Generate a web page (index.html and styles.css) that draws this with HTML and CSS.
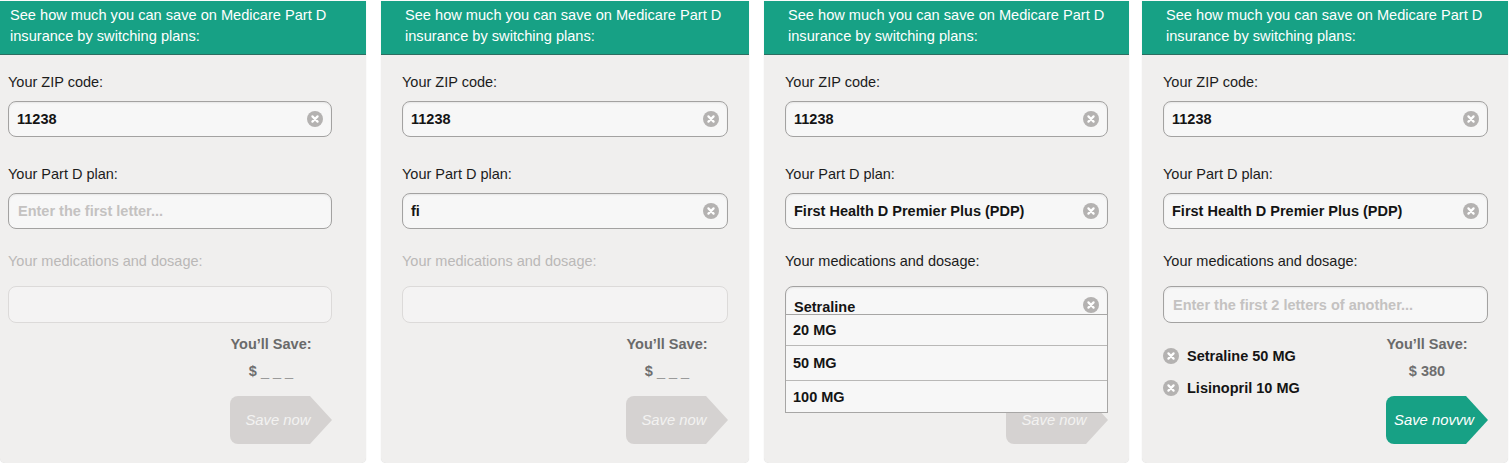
FILE: index.html
```html
<!DOCTYPE html>
<html lang="en">
<head>
<meta charset="utf-8">
<title>Medicare Part D savings</title>
<link rel="stylesheet" href="styles.css">
</head>
<body>
<div class="board">

  <section class="panel p1">
    <header class="panel-head">See how much you can save on Medicare Part D<br>insurance by switching plans:</header>
    <div class="panel-body">
      <div class="field-label">Your ZIP code:</div>
      <div class="input"><span class="value">11238</span><svg class="clear" viewBox="0 0 16 16"><circle cx="8" cy="8" r="8"/><path d="M5.4 5.4l5.2 5.2M10.6 5.4l-5.2 5.2"/></svg></div>
      <div class="field-label gap-plan">Your Part D plan:</div>
      <div class="input"><span class="placeholder">Enter the first letter...</span></div>
      <div class="field-label gap-meds disabled">Your medications and dosage:</div>
      <div class="input meds disabled"></div>
      <div class="result-row">
        <div class="chips"></div>
        <div class="savings">
          <div class="save-label">You’ll Save:</div>
          <div class="save-amount">$ <span class="blank">_ _ _</span></div>
          <button class="save-btn" type="button">Save now</button>
        </div>
      </div>
    </div>
  </section>

  <section class="panel p2">
    <header class="panel-head">See how much you can save on Medicare Part D<br>insurance by switching plans:</header>
    <div class="panel-body">
      <div class="field-label">Your ZIP code:</div>
      <div class="input"><span class="value">11238</span><svg class="clear" viewBox="0 0 16 16"><circle cx="8" cy="8" r="8"/><path d="M5.4 5.4l5.2 5.2M10.6 5.4l-5.2 5.2"/></svg></div>
      <div class="field-label gap-plan">Your Part D plan:</div>
      <div class="input"><span class="value">fi</span><svg class="clear" viewBox="0 0 16 16"><circle cx="8" cy="8" r="8"/><path d="M5.4 5.4l5.2 5.2M10.6 5.4l-5.2 5.2"/></svg></div>
      <div class="field-label gap-meds disabled">Your medications and dosage:</div>
      <div class="input meds disabled"></div>
      <div class="result-row">
        <div class="chips"></div>
        <div class="savings">
          <div class="save-label">You’ll Save:</div>
          <div class="save-amount">$ <span class="blank">_ _ _</span></div>
          <button class="save-btn" type="button">Save now</button>
        </div>
      </div>
    </div>
  </section>

  <section class="panel p3">
    <header class="panel-head">See how much you can save on Medicare Part D<br>insurance by switching plans:</header>
    <div class="panel-body">
      <div class="field-label">Your ZIP code:</div>
      <div class="input"><span class="value">11238</span><svg class="clear" viewBox="0 0 16 16"><circle cx="8" cy="8" r="8"/><path d="M5.4 5.4l5.2 5.2M10.6 5.4l-5.2 5.2"/></svg></div>
      <div class="field-label gap-plan">Your Part D plan:</div>
      <div class="input"><span class="value">First Health D Premier Plus (PDP)</span><svg class="clear" viewBox="0 0 16 16"><circle cx="8" cy="8" r="8"/><path d="M5.4 5.4l5.2 5.2M10.6 5.4l-5.2 5.2"/></svg></div>
      <div class="field-label gap-meds">Your medications and dosage:</div>
      <div class="input meds open"><span class="value low">Setraline</span><svg class="clear" viewBox="0 0 16 16"><circle cx="8" cy="8" r="8"/><path d="M5.4 5.4l5.2 5.2M10.6 5.4l-5.2 5.2"/></svg>
        <ul class="dropdown">
          <li class="opt opt1">20 MG</li>
          <li class="opt opt2">50 MG</li>
          <li class="opt opt3">100 MG</li>
        </ul>
      </div>
      <div class="result-row">
        <div class="chips"></div>
        <div class="savings">
          <div class="save-label">You’ll Save:</div>
          <div class="save-amount">$ <span class="blank">_ _ _</span></div>
          <button class="save-btn" type="button">Save now</button>
        </div>
      </div>
    </div>
  </section>

  <section class="panel p4">
    <header class="panel-head">See how much you can save on Medicare Part D<br>insurance by switching plans:</header>
    <div class="panel-body">
      <div class="field-label">Your ZIP code:</div>
      <div class="input"><span class="value">11238</span><svg class="clear" viewBox="0 0 16 16"><circle cx="8" cy="8" r="8"/><path d="M5.4 5.4l5.2 5.2M10.6 5.4l-5.2 5.2"/></svg></div>
      <div class="field-label gap-plan">Your Part D plan:</div>
      <div class="input"><span class="value">First Health D Premier Plus (PDP)</span><svg class="clear" viewBox="0 0 16 16"><circle cx="8" cy="8" r="8"/><path d="M5.4 5.4l5.2 5.2M10.6 5.4l-5.2 5.2"/></svg></div>
      <div class="field-label gap-meds">Your medications and dosage:</div>
      <div class="input meds"><span class="placeholder">Enter the first 2 letters of another...</span></div>
      <div class="result-row">
        <div class="chips">
          <div class="chip"><svg class="clear" viewBox="0 0 16 16"><circle cx="8" cy="8" r="8"/><path d="M5.4 5.4l5.2 5.2M10.6 5.4l-5.2 5.2"/></svg><span>Setraline 50 MG</span></div>
          <div class="chip"><svg class="clear" viewBox="0 0 16 16"><circle cx="8" cy="8" r="8"/><path d="M5.4 5.4l5.2 5.2M10.6 5.4l-5.2 5.2"/></svg><span>Lisinopril 10 MG</span></div>
        </div>
        <div class="savings">
          <div class="save-label">You’ll Save:</div>
          <div class="save-amount">$ 380</div>
          <button class="save-btn active" type="button">Save novvw</button>
        </div>
      </div>
    </div>
  </section>

</div>
</body>
</html>
```

FILE: styles.css
```css
* { box-sizing: border-box; }

body {
  margin: 0;
  background: #ffffff;
  font-family: "Liberation Sans", Arial, Helvetica, sans-serif;
  font-size: 14.5px;
  color: #1c1c1c;
}

.board {
  display: flex;
  align-items: flex-start;
  padding-top: 1px;
}

.panel {
  position: relative;
  height: 462px;
  background: #f0efee;
  border-radius: 0 0 5px 5px;
  box-shadow: 0 0 1px rgba(0, 0, 0, 0.18);
}

.p1 { width: 366px; }
.p2 { width: 368px; margin-left: 15px; }
.p3 { width: 365px; margin-left: 15px; }
.p4 { width: 366px; margin-left: 13px; }

.panel-head {
  background: #17a185;
  color: #ffffff;
  font-size: 14.6px;
  line-height: 21px;
  padding: 4px 8px 7px 24px;
  border-bottom: 1px solid #2c6e61;
  white-space: nowrap;
}
.p1 .panel-head { padding-left: 10px; }

.panel-body {
  padding: 18px 21px 0 21px;
}
.p1 .panel-body { padding-left: 8px; padding-right: 34px; }
.p4 .panel-body { padding-right: 20px; }

.field-label {
  line-height: 18px;
  color: #1c1c1c;
}
.field-label.disabled { color: #bab8b7; }
.gap-plan { margin-top: 28px; }
.gap-meds { margin-top: 23px; }

.input {
  position: relative;
  margin-top: 10px;
  height: 36px;
  display: flex;
  align-items: center;
  padding: 0 8px 0 8px;
  background: #f7f7f7;
  border: 1px solid #a3a2a1;
  border-radius: 8px;
  box-shadow: inset 0 1px 2px rgba(0, 0, 0, 0.07);
}
.input.meds { margin-top: 16px; height: 37px; }
.input.disabled {
  border-color: #dcdad9;
  background: #f4f3f3;
  box-shadow: none;
}

.value {
  flex: 1;
  font-weight: bold;
  color: #141414;
  white-space: nowrap;
}
.value.low { padding-top: 4px; }

.placeholder {
  flex: 1;
  padding-left: 1px;
  font-weight: bold;
  color: #c4c2c1;
  white-space: nowrap;
}

.clear {
  width: 16px;
  height: 16px;
  flex: none;
}
.clear circle { fill: #b4b2b1; }
.clear path {
  stroke: #ffffff;
  stroke-width: 2.2;
  stroke-linecap: round;
  fill: none;
}

.dropdown {
  position: absolute;
  z-index: 2;
  top: 27px;
  left: -1px;
  right: -1px;
  margin: 0;
  padding: 0;
  list-style: none;
  background: #f7f7f7;
  border: 1px solid #a7a6a5;
}
.opt {
  display: flex;
  align-items: center;
  padding-left: 7px;
  font-weight: bold;
  color: #141414;
}
.opt + .opt { border-top: 1px solid #b9b8b7; }
.opt1 { height: 30px; }
.opt2 { height: 35px; }
.opt3 { height: 32px; }

.result-row {
  display: flex;
  justify-content: space-between;
  align-items: flex-start;
  margin-top: 12px;
}

.chips {
  padding-top: 12px;
  display: flex;
  flex-direction: column;
  gap: 14px;
}
.chip {
  display: flex;
  align-items: center;
  gap: 8px;
  height: 18px;
  font-weight: bold;
  color: #141414;
}

.savings {
  width: 102px;
  display: flex;
  flex-direction: column;
  align-items: stretch;
}
.save-label,
.save-amount {
  padding-right: 20px;
  text-align: center;
  line-height: 18px;
  font-weight: bold;
  color: #6a6a6a;
  white-space: nowrap;
}
.save-amount { margin-top: 9px; color: #6e6e6e; }
.blank { font-weight: normal; color: #9a9a9a; }

.save-btn {
  margin-top: 16px;
  width: 102px;
  height: 48px;
  border: 0;
  padding: 0 6px 0 0;
  background: #d5d2d1;
  color: #f3f2f1;
  font-family: "Liberation Sans", Arial, Helvetica, sans-serif;
  font-size: 14.8px;
  font-style: italic;
  border-radius: 8px 0 0 8px;
  clip-path: polygon(0 0, 80px 0, 100% 50%, 80px 100%, 0 100%);
  cursor: pointer;
}
.save-btn.active {
  background: #17a185;
  color: #ffffff;
}
```
